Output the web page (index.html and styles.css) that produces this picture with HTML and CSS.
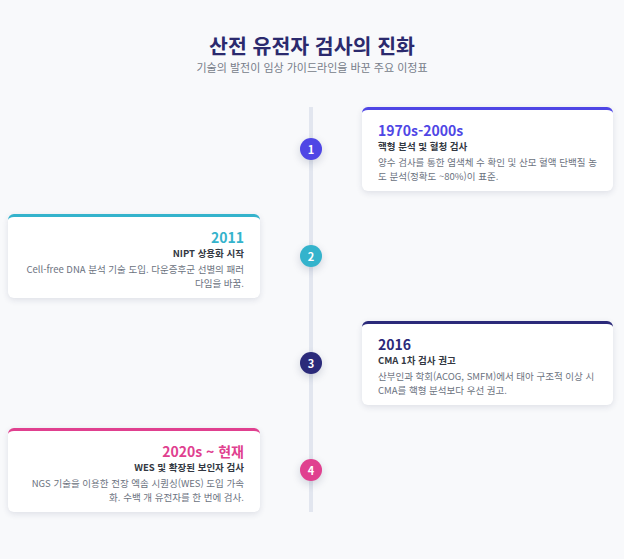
FILE: index.html
```html
<!DOCTYPE html>
<html lang="ko">
<head>
<meta charset="utf-8">
<title>산전 유전자 검사의 진화</title>
<link rel="stylesheet" href="styles.css">
</head>
<body>
<header class="header">
  <h1 class="title">산전 유전자 검사의 진화</h1>
  <p class="subtitle">기술의 발전이 임상 가이드라인을 바꾼 주요 이정표</p>
</header>
<div class="timeline">
  <div class="item item-right c1">
    <div class="marker">1</div>
    <div class="card">
      <div class="year">1970s-2000s</div>
      <div class="event">핵형 분석 및 혈청 검사</div>
      <p class="desc">양수 검사를 통한 염색체 수 확인 및 산모 혈액 단백질 농도 분석(정확도 ~80%)이 표준.</p>
    </div>
  </div>
  <div class="item item-left c2">
    <div class="card">
      <div class="year">2011</div>
      <div class="event">NIPT 상용화 시작</div>
      <p class="desc">Cell-free DNA 분석 기술 도입. 다운증후군 선별의 패러다임을 바꿈.</p>
    </div>
    <div class="marker">2</div>
  </div>
  <div class="item item-right c3">
    <div class="marker">3</div>
    <div class="card">
      <div class="year">2016</div>
      <div class="event">CMA 1차 검사 권고</div>
      <p class="desc">산부인과 학회(ACOG, SMFM)에서 태아 구조적 이상 시 CMA를 핵형 분석보다 우선 권고.</p>
    </div>
  </div>
  <div class="item item-left c4">
    <div class="card">
      <div class="year">2020s ~ 현재</div>
      <div class="event">WES 및 확장된 보인자 검사</div>
      <p class="desc">NGS 기술을 이용한 전장 엑솜 시퀀싱(WES) 도입 가속화. 수백 개 유전자를 한 번에 검사.</p>
    </div>
    <div class="marker">4</div>
  </div>
</div>
</body>
</html>
```

FILE: styles.css
```css
* { box-sizing: border-box; }
html, body { margin: 0; padding: 0; }
body {
  background: #f8f9fb;
  font-family: "Noto Sans CJK KR", "Noto Sans", sans-serif;
  color: #333;
  width: 624px;
  height: 559px;
  overflow: hidden;
}
.header {
  text-align: center;
  padding-top: 32px;
}
.title {
  margin: 0;
  font-size: 20.5px;
  line-height: 26px;
  font-weight: 700;
  color: #2b2a6e;
}
.subtitle {
  margin: 2px 0 0;
  font-size: 11px;
  line-height: 14px;
  color: #767c89;
}
.timeline {
  position: relative;
  width: 605px;
  margin: 33px 0 0 8px;
  display: flex;
  flex-direction: column;
  gap: 23px;
}
.timeline::before {
  content: "";
  position: absolute;
  left: 301px;
  top: 0;
  bottom: 0;
  width: 4px;
  background: #e2e6ef;
}
.item {
  display: grid;
  grid-template-columns: 252px 102px 251px;
  align-items: center;
}
.item-right .marker { grid-column: 2; grid-row: 1; }
.item-right .card { grid-column: 3; grid-row: 1; }
.item-left .card { grid-column: 1; grid-row: 1; text-align: right; }
.item-left .marker { grid-column: 2; grid-row: 1; }
.marker {
  position: relative;
  z-index: 1;
  justify-self: center;
  width: 22px;
  height: 22px;
  border-radius: 50%;
  color: #fff;
  font-size: 11px;
  font-weight: 700;
  display: flex;
  align-items: center;
  justify-content: center;
  box-shadow: 0 3px 8px rgba(30, 40, 80, 0.18);
}
.card {
  background: #fff;
  border-radius: 6px;
  border-top: 3px solid;
  box-shadow: 0 2px 6px rgba(30, 40, 80, 0.12);
  padding: 11px 16px 0;
  height: 84px;
}
.year {
  font-size: 14px;
  line-height: 18px;
  font-weight: 700;
}
.event {
  font-size: 9.5px;
  line-height: 14px;
  font-weight: 700;
  color: #333842;
}
.desc {
  margin: 2px 0 0;
  font-size: 9.5px;
  line-height: 14px;
  color: #6b7280;
}
.c1 .card { border-top-color: #4f46e5; }
.c1 .year { color: #4f46e5; }
.c1 .marker { background: #4f46e5; }
.c2 .card { border-top-color: #34b3cc; }
.c2 .year { color: #34b3cc; }
.c2 .marker { background: #34b3cc; }
.c3 .card { border-top-color: #2b2a7a; }
.c3 .year { color: #2b2a7a; }
.c3 .marker { background: #2b2a7a; }
.c4 .card { border-top-color: #e0408f; }
.c4 .year { color: #e0408f; }
.c4 .marker { background: #e0408f; }
```
